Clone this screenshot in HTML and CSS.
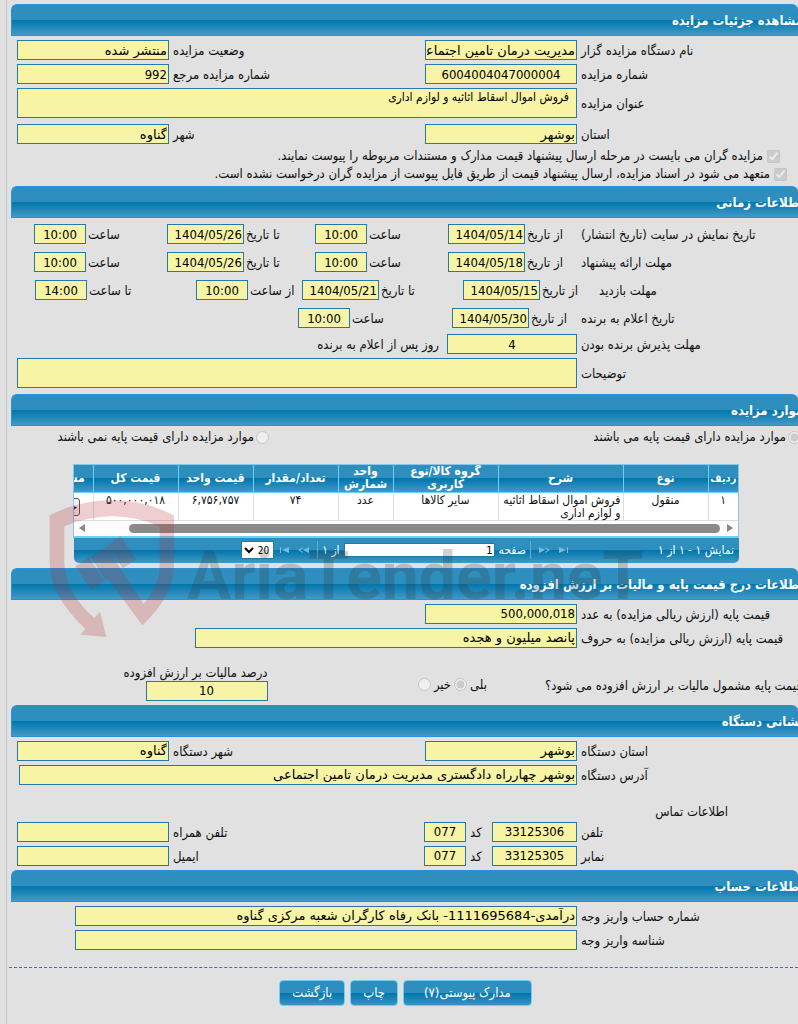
FILE: index.html
```
<!DOCTYPE html>
<html lang="fa" dir="rtl">
<head>
    <meta charset="UTF-8">
    <title>مشاهده جزئیات مزایده</title>
    <link rel="stylesheet" href="styles.css">
</head>
<body>
<form class="page">
    <h2 class="bar"><span>مشاهده جزئیات مزایده</span></h2>
    <div class="rows">
        <div class="row">
            <label for="org">نام دستگاه مزایده گزار</label>
            <input type="text" id="org" class="fa" value="مدیریت درمان تامین اجتماعی" readonly>
            <label for="status">وضعیت مزایده</label>
            <input type="text" id="status" class="fa" value="منتشر شده" readonly>
        </div>
        <div class="row">
            <label for="number">شماره مزایده</label>
            <input type="text" id="number" class="center" value="6004004047000004" readonly>
            <label for="refnumber">شماره مزایده مرجع</label>
            <input type="text" id="refnumber" value="992" readonly>
        </div>
        <div class="row">
            <label for="subject">عنوان مزایده</label>
            <textarea id="subject" class="wide" readonly>فروش اموال اسقاط اثاثیه و لوازم اداری</textarea>
        </div>
        <div class="row after-area">
            <label for="province">استان</label>
            <input type="text" id="province" class="fa" value="بوشهر" readonly>
            <label for="city">شهر</label>
            <input type="text" id="city" class="fa" value="گناوه" readonly>
        </div>
    </div>
    <div class="checks">
        <label class="check first"><input type="checkbox" checked disabled>مزایده گران می بایست در مرحله ارسال پیشنهاد قیمت مدارک و مستندات مربوطه را پیوست نمایند.</label>
        <label class="check"><input type="checkbox" checked disabled>متعهد می شود در اسناد مزایده، ارسال پیشنهاد قیمت از طریق فایل پیوست از مزایده گران درخواست نشده است.</label>
    </div>

    <h2 class="bar"><span>اطلاعات زمانی</span></h2>
    <div class="times">
        <div class="time-row">
            <span class="caption">تاریخ نمایش در سایت (تاریخ انتشار)</span>
            <span class="pair"><label for="d1">از تاریخ</label><input type="text" id="d1" class="date" value="1404/05/14" readonly></span>
            <span class="pair"><label for="t1">ساعت</label><input type="text" id="t1" class="time" value="10:00" readonly></span>
            <span class="pair"><label for="d2">تا تاریخ</label><input type="text" id="d2" class="date" value="1404/05/26" readonly></span>
            <span class="pair"><label for="t2">ساعت</label><input type="text" id="t2" class="time" value="10:00" readonly></span>
        </div>
        <div class="time-row">
            <span class="caption">مهلت ارائه پیشنهاد</span>
            <span class="pair"><label for="d3">از تاریخ</label><input type="text" id="d3" class="date" value="1404/05/18" readonly></span>
            <span class="pair"><label for="t3">ساعت</label><input type="text" id="t3" class="time" value="10:00" readonly></span>
            <span class="pair"><label for="d4">تا تاریخ</label><input type="text" id="d4" class="date" value="1404/05/26" readonly></span>
            <span class="pair"><label for="t4">ساعت</label><input type="text" id="t4" class="time" value="10:00" readonly></span>
        </div>
        <div class="time-row visit">
            <span class="caption">مهلت بازدید</span>
            <span class="pair"><label for="d5">از تاریخ</label><input type="text" id="d5" class="date" value="1404/05/15" readonly></span>
            <span class="pair"><label for="d6">تا تاریخ</label><input type="text" id="d6" class="date" value="1404/05/21" readonly></span>
            <span class="pair"><label for="t5">از ساعت</label><input type="text" id="t5" class="time" value="10:00" readonly></span>
            <span class="pair"><label for="t6">تا ساعت</label><input type="text" id="t6" class="time" value="14:00" readonly></span>
        </div>
        <div class="time-row winner">
            <span class="caption">تاریخ اعلام به برنده</span>
            <span class="pair"><label for="d7">از تاریخ</label><input type="text" id="d7" class="date" value="1404/05/30" readonly></span>
            <span class="pair"><label for="t7">ساعت</label><input type="text" id="t7" class="time" value="10:00" readonly></span>
        </div>
    </div>
    <div class="rows">
        <div class="row deadline">
            <label for="days">مهلت پذیرش برنده بودن</label>
            <input type="text" id="days" class="center" value="4" readonly>
            <span class="note">روز پس از اعلام به برنده</span>
        </div>
        <div class="row">
            <label for="desc">توضیحات</label>
            <textarea id="desc" class="wide" readonly></textarea>
        </div>
    </div>

    <h2 class="bar after-rows"><span>موارد مزایده</span></h2>
    <div class="radios">
        <label class="radio"><input type="radio" name="base" checked disabled>موارد مزایده دارای قیمت پایه می باشند</label>
        <label class="radio"><input type="radio" name="base" disabled>موارد مزایده دارای قیمت پایه نمی باشند</label>
    </div>
    <div class="grid">
        <div class="grid-body">
            <table>
                <colgroup>
                    <col class="c-row"><col class="c-type"><col class="c-desc"><col class="c-group"><col class="c-unit"><col class="c-count"><col class="c-price"><col class="c-total"><col class="c-doc">
                </colgroup>
                <thead>
                    <tr><th>ردیف</th><th>نوع</th><th>شرح</th><th>گروه کالا/نوع کاربری</th><th>واحد شمارش</th><th>تعداد/مقدار</th><th>قیمت واحد</th><th>قیمت کل</th><th>مستندات</th></tr>
                </thead>
                <tbody>
                    <tr>
                        <td>۱</td><td>منقول</td><td class="text">فروش اموال اسقاط اثاثیه و لوازم اداری</td><td>سایر کالاها</td><td>عدد</td><td>۷۴</td><td>۶,۷۵۶,۷۵۷</td><td>۵۰۰,۰۰۰,۰۱۸</td>
                        <td><button type="button" class="detail">جزئیات</button></td>
                    </tr>
                </tbody>
            </table>
            <div class="scroll">
                <svg width="6" height="8" viewBox="0 0 6 8"><path d="M0 0L6 4L0 8Z" fill="#888"/></svg>
                <span class="thumb"></span>
                <svg width="6" height="8" viewBox="0 0 6 8"><path d="M6 0L0 4L6 8Z" fill="#888"/></svg>
            </div>
        </div>
        <div class="pager">
            <span class="info">نمایش ۱ - ۱ از ۱</span>
            <svg class="nav" width="10" height="8" viewBox="0 0 10 8"><path d="M0 1L7 4L0 7ZM8 1H9V7H8Z"/></svg>
            <svg class="nav" width="12" height="8" viewBox="0 0 12 8"><path d="M0 1L6 4L0 7ZM6 1L11 4L6 7V6L9 4L6 2Z"/></svg>
            <span class="sep"></span>
            <label for="pageno">صفحه</label>
            <input type="text" id="pageno" value="1">
            <span class="of">از ۱</span>
            <span class="sep"></span>
            <svg class="nav" width="12" height="8" viewBox="0 0 12 8"><path d="M12 1L6 4L12 7ZM6 1L1 4L6 7V6L3 4L6 2Z"/></svg>
            <svg class="nav" width="10" height="8" viewBox="0 0 10 8"><path d="M10 1L3 4L10 7ZM2 1H1V7H2Z"/></svg>
            <select dir="ltr" aria-label="تعداد در صفحه"><option>20</option></select>
        </div>
        <div class="watermark" dir="ltr">
            <svg width="126" height="140" viewBox="0 0 378 420">
                <path fill-rule="evenodd" d="M2 49Q90 4 188 4T375 49V195Q375 290 280 379L178 241L168 240L125 174L176 141L216 212L284 315Q332 260 332 195V82Q190 22 46 82V195Q52 285 136 357L153 338L172 414L94 407L109 390Q2 290 2 190Z"/>
                <path d="M79 202L120 175L166 245L127 274ZM174 142L214 111L262 181L222 208Z"/>
            </svg>
            <span>AriaTender.neT</span>
        </div>
    </div>

    <h2 class="bar"><span>اطلاعات درج قیمت پایه و مالیات بر ارزش افزوده</span></h2>
    <div class="rows">
        <div class="row">
            <label for="price">قیمت پایه (ارزش ریالی مزایده) به عدد</label>
            <input type="text" id="price" value="500,000,018" readonly>
        </div>
        <div class="row words">
            <label for="words">قیمت پایه (ارزش ریالی مزایده) به حروف</label>
            <input type="text" id="words" class="fa" value="پانصد میلیون و هجده" readonly>
        </div>
    </div>
    <div class="vat">
        <span class="question">قیمت پایه مشمول مالیات بر ارزش افزوده می شود؟</span>
        <span class="answers">
            <label for="yes">بلی</label><input type="radio" id="yes" name="vat" checked disabled>
            <label for="no">خیر</label><input type="radio" id="no" name="vat" disabled>
        </span>
        <span class="percent">
            <label for="percent">درصد مالیات بر ارزش افزوده</label>
            <input type="text" id="percent" class="center" value="10" readonly>
        </span>
    </div>

    <h2 class="bar"><span>نشانی دستگاه</span></h2>
    <div class="rows">
        <div class="row">
            <label for="orgprovince">استان دستگاه</label>
            <input type="text" id="orgprovince" class="fa" value="بوشهر" readonly>
            <label for="orgcity">شهر دستگاه</label>
            <input type="text" id="orgcity" class="fa" value="گناوه" readonly>
        </div>
        <div class="row address">
            <label for="address">آدرس دستگاه</label>
            <input type="text" id="address" class="fa" value="بوشهر چهارراه دادگستری مدیریت درمان تامین اجتماعی" readonly>
        </div>
    </div>
    <h3 class="contact">اطلاعات تماس</h3>
    <div class="rows phones">
        <div class="row phone">
            <label for="tel">تلفن</label>
            <input type="text" id="tel" class="center" value="33125306" readonly>
            <label for="telcode">کد</label>
            <input type="text" id="telcode" class="center" value="077" readonly>
            <label for="mobile">تلفن همراه</label>
            <input type="text" id="mobile" readonly>
        </div>
        <div class="row phone">
            <label for="fax">نمابر</label>
            <input type="text" id="fax" class="center" value="33125305" readonly>
            <label for="faxcode">کد</label>
            <input type="text" id="faxcode" class="center" value="077" readonly>
            <label for="email">ایمیل</label>
            <input type="text" id="email" readonly>
        </div>
    </div>

    <h2 class="bar"><span>اطلاعات حساب</span></h2>
    <div class="rows">
        <div class="row account">
            <label for="account">شماره حساب واریز وجه</label>
            <input type="text" id="account" class="fa" value="درآمدی-1111695684- بانک رفاه کارگران شعبه مرکزی گناوه" readonly>
        </div>
        <div class="row account">
            <label for="payid">شناسه واریز وجه</label>
            <input type="text" id="payid" readonly>
        </div>
    </div>
    <div class="buttons">
        <button type="button" class="btn large">مدارک پیوستی(۷)</button>
        <button type="button" class="btn">چاپ</button>
        <button type="button" class="btn">بازگشت</button>
    </div>
</form>
</body>
</html>
```
FILE: styles.css
```
* {
    box-sizing: border-box;
}

body {
    margin: 0;
    background: #e1e1e1;
    color: #111;
    font-family: Tahoma, "DejaVu Sans Condensed", "DejaVu Sans", sans-serif;
    font-size: 13px;
    line-height: 16px;
    overflow: hidden;
}

.page {
    margin-left: 6px;
    padding: 4px 0 20px 4px;
    border-left: 1px solid #c8c8c8;
    min-height: 100vh;
}

input, textarea, select, button {
    font-family: inherit;
    margin: 0;
}

/* section header */
.bar {
    height: 32px;
    margin: 0;
    border: 1px solid #2a8fdd;
    border-width: 1px 0 1px 1px;
    border-radius: 6px 6px 0 0;
    background: linear-gradient(#2e8fbf 0, #2e8fbf 50%, #0076ae 50%, #4399c4 100%);
    color: #fff;
    font-size: 13px;
    line-height: 32px;
    overflow: hidden;
}
.bar span {
    margin-right: -5px;
}

/* label / field rows */
.rows {
    display: flex;
    flex-direction: column;
    gap: 4px;
    padding: 4px 0 2px;
}
.row {
    display: grid;
    grid-template-columns: 221fr 152fr 256fr 152fr 6fr;
    align-items: center;
}
.row label {
    text-align: left;
    padding: 2px 0 0 4px;
    white-space: nowrap;
}
input[type="text"], textarea {
    width: 100%;
    min-width: 0;
    height: 20px;
    padding: 0 1px;
    border: 1px solid #2579a9;
    border-radius: 0;
    background: #f7f4a5;
    color: #000;
    font-size: 13px;
    outline: none;
}
input.fa {
    font-family: Tahoma, "DejaVu Sans", sans-serif;
}
textarea {
    display: block;
    height: 30px;
    padding: 1px 7px;
    font-size: 12px;
    resize: none;
    overflow: hidden;
}
input.center {
    text-align: center;
}
.row .wide {
    grid-column: 2 / 5;
}
.after-area {
    margin-top: 2px;
}
.after-rows {
    margin-top: 4px;
}

.checks {
    display: flex;
    flex-direction: column;
    padding: 1px 11px 3px 0;
}
.check {
    display: flex;
    align-items: center;
    gap: 4px;
    height: 18px;
}
.check.first {
    padding-right: 7px;
}
.check input, .radio input, .answers input {
    width: 13px;
    height: 13px;
    flex: none;
}

/* dates and hours */
.times {
    display: flex;
    flex-direction: column;
    gap: 8px;
    padding: 6px 0 2px;
}
.time-row {
    display: grid;
    grid-template-columns: 221fr 129fr 133fr 148fr 133fr 23fr;
    align-items: center;
    white-space: nowrap;
}
.time-row.visit {
    grid-template-columns: 203fr 132fr 161fr 106fr 161fr 24fr;
}
.time-row.winner {
    grid-template-columns: 221fr 125fr 154fr 287fr;
}
.caption {
    text-align: left;
    padding: 2px 0 0 4px;
}
.pair {
    display: flex;
    justify-content: flex-end;
    align-items: center;
    gap: 2px;
}
.pair label {
    padding-top: 2px;
}
.pair .date {
    width: 77px;
}
.pair .time {
    width: 52px;
    text-align: center;
}
.deadline {
    grid-template-columns: 221fr 130fr 436fr;
}
.note {
    padding: 2px 8px 0 0;
}

/* items table */
.radios {
    display: grid;
    grid-template-columns: 529fr 258fr;
    height: 38px;
    padding-top: 3px;
    align-items: start;
}
.radio {
    display: flex;
    align-items: center;
    gap: 2px;
    height: 16px;
}
.radio:first-child {
    margin-right: -3px;
}
.grid {
    position: relative;
    margin: 0 59px 5px 62px;
}
.grid-body {
    border: 1px solid #88c5e8;
    border-bottom: 2px solid #6fd0f7;
    background: #fff;
    overflow: hidden;
}
.grid table {
    width: 709px;
    table-layout: fixed;
    border-collapse: collapse;
}
.c-row { width: 30px; }
.c-type, .c-count, .c-total { width: 85px; }
.c-desc { width: 125px; }
.c-group { width: 105px; }
.c-unit { width: 55px; }
.c-price { width: 75px; }
.c-doc { width: 64px; }
.grid th {
    height: 27px;
    padding: 0;
    border-left: 1px solid #6fd0f7;
    border-bottom: 1px solid #6fd0f7;
    background: linear-gradient(#2e8fbf 0, #2e8fbf 50%, #0076ae 50%, #4399c4 100%);
    color: #fff;
    font-size: 12px;
    line-height: 13px;
}
.grid th:first-child {
    font-size: 11px;
}
.grid td {
    height: 28px;
    padding: 1px 2px 0;
    border-left: 1px solid #ddd;
    border-bottom: 1px solid #ddd;
    font-size: 12px;
    line-height: 13px;
    text-align: center;
    vertical-align: top;
}
.grid td.text {
    text-align: right;
}
.detail {
    display: block;
    width: 38px;
    height: 18px;
    margin: 4px auto 0;
    padding: 0 1px;
    border: 1px solid #555;
    border-radius: 3px;
    background: #efefef;
    font-size: 12px;
    line-height: 14px;
}
.scroll {
    display: flex;
    align-items: center;
    gap: 7px;
    height: 15px;
    padding: 0 5px;
    background: #fcfcfc;
}
.thumb {
    flex: 1;
    height: 9px;
    margin-left: 37px;
    border-radius: 5px;
    background: #8a8a8a;
}
.pager {
    display: flex;
    align-items: center;
    gap: 8px;
    height: 25px;
    margin-left: 1px;
    padding-right: 5px;
    border-radius: 0 0 5px 5px;
    background: linear-gradient(#2e8fbf 0, #2e8fbf 50%, #0076ae 50%, #4399c4 100%);
    color: #fff;
    font-size: 12px;
    white-space: nowrap;
}
.info {
    width: 157px;
}
.nav {
    fill: #7db9d8;
}
.sep {
    width: 1px;
    height: 18px;
    background: #63acd0;
}
.pager label {
    margin: 0 -4px;
}
.pager input[type="text"] {
    width: 151px;
    height: 14px;
    background: #fff;
    font-size: 11px;
}
.pager .of {
    margin: 0 -4px;
}
.pager select {
    width: 33px;
    height: 18px;
    margin-right: -3px;
    padding: 0;
    border: 1px solid #2579a9;
    background: #fff;
    color: #000;
    font-size: 10px;
    direction: rtl;
}
.watermark {
    position: absolute;
    left: -24px;
    top: 35px;
    display: flex;
    gap: 12px;
    pointer-events: none;
}
.watermark svg {
    flex: none;
    fill: #b9262c;
    opacity: .22;
}
.watermark span {
    color: #333;
    opacity: .22;
    font-family: Roboto, "Liberation Sans", sans-serif;
    font-size: 66px;
    font-weight: bold;
    line-height: 156px;
}

/* price and tax */
.words {
    grid-template-columns: 221fr 382fr 184fr;
}
.vat {
    display: grid;
    grid-template-columns: 250fr 279fr 258fr;
    height: 55px;
    padding-top: 15px;
}
.question {
    margin: 13px -4px 0 0;
    white-space: nowrap;
}
.answers {
    display: flex;
    align-items: center;
    gap: 3px;
    height: 14px;
    margin-top: 13px;
    padding-right: 58px;
}
.percent label {
    display: block;
    height: 16px;
    white-space: nowrap;
}
.percent input {
    display: block;
}
.percent input[type="text"] {
    width: 122px;
}

/* address and phones */
.address {
    grid-template-columns: 221fr 558fr 8fr;
}
.contact {
    margin: 17px 70px 0 0;
    font-size: 13px;
    font-weight: normal;
    line-height: 16px;
}
.phones {
    padding: 2px 0 4px;
}
.phone {
    grid-template-columns: 221fr 85fr 26fr 42fr 255fr 152fr 6fr;
}
.account {
    grid-template-columns: 221fr 502fr 64fr;
}

/* bottom buttons */
.buttons {
    display: flex;
    justify-content: center;
    gap: 5px;
    margin: 15px 0 0 -2px;
    padding: 12px 0 0 4px;
    border-top: 1px dashed #2579a9;
}
.btn {
    height: 26px;
    padding: 0 12px;
    border: 1px solid #6fd0f7;
    border-radius: 4px;
    background: linear-gradient(#2e8fbf 0, #2e8fbf 50%, #0076ae 50%, #3a93c0 100%);
    color: #fff;
    font-size: 13px;
}
.btn.large {
    padding: 0 20px;
}
```
